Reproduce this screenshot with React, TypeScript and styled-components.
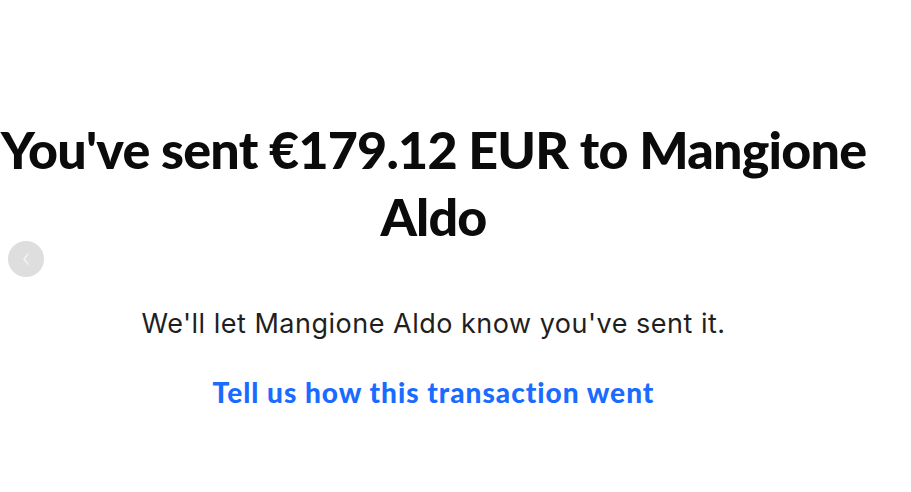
import React from 'react';
import styled, { createGlobalStyle } from 'styled-components';

const GlobalStyle = createGlobalStyle`
  html, body {
    margin: 0;
    padding: 0;
    background: #ffffff;
  }
  body {
    font-family: "Lato", "Liberation Sans", sans-serif;
  }
`;

const Page = styled.div`
  position: relative;
  width: 911px;
  height: 492px;
  overflow: hidden;
  display: flex;
  flex-direction: column;
  align-items: center;
  padding: 116px 44px 0 0;
  box-sizing: border-box;
`;

const BackButton = styled.button`
  position: absolute;
  left: 8px;
  top: 241px;
  width: 36px;
  height: 36px;
  border: none;
  border-radius: 50%;
  background: #dedede;
  display: flex;
  align-items: center;
  justify-content: center;
  padding: 0;
  cursor: pointer;
`;

const Heading = styled.h1`
  margin: 0;
  width: 900px;
  flex-shrink: 0;
  text-align: center;
  font-family: "Lato", sans-serif;
  font-weight: 900;
  font-size: 52px;
  line-height: 67px;
  letter-spacing: -0.8px;
  color: #0b0b0b;
`;

const Message = styled.p`
  margin: 58px 0 0;
  font-family: "Inter", "Liberation Sans", sans-serif;
  font-size: 27px;
  line-height: 32px;
  letter-spacing: 0.5px;
  color: #1f1f1f;
`;

const FeedbackLink = styled.a`
  margin-top: 35px;
  font-family: "Lato", sans-serif;
  font-weight: 900;
  font-size: 28px;
  line-height: 34px;
  letter-spacing: 1px;
  color: #1a6bff;
  text-decoration: none;
  cursor: pointer;
`;

export default function App() {
  return (
    <>
      <GlobalStyle />
      <Page>
        <BackButton aria-label="Back">
          <svg width="10" height="14" viewBox="0 0 10 14" fill="none">
            <path d="M7 2 L3 7 L7 12" stroke="#f4f4f4" strokeWidth="1.4" strokeLinecap="round" strokeLinejoin="round" />
          </svg>
        </BackButton>
        <Heading>
          You've sent €179.12 EUR to Mangione
          <br />
          Aldo
        </Heading>
        <Message>We'll let Mangione Aldo know you've sent it.</Message>
        <FeedbackLink>Tell us how this transaction went</FeedbackLink>
      </Page>
    </>
  );
}
